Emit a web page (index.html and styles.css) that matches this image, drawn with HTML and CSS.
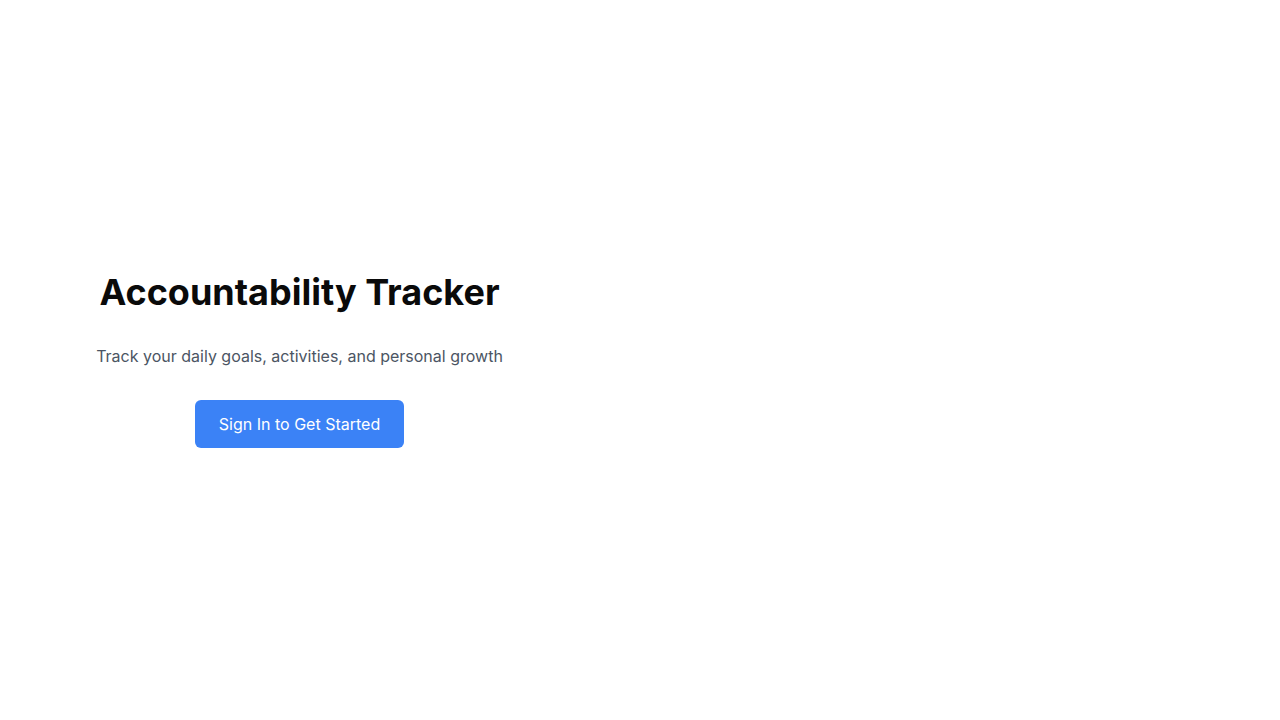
FILE: index.html
```html
<!DOCTYPE html>
<html lang="en">
<head>
<meta charset="utf-8">
<title>Accountability Tracker</title>
<link rel="stylesheet" href="styles.css">
</head>
<body>
<main class="page">
  <section class="hero">
    <h1 class="title">Accountability Tracker</h1>
    <p class="subtitle">Track your daily goals, activities, and personal growth</p>
    <button class="cta" type="button">Sign In to Get Started</button>
  </section>
</main>
</body>
</html>
```

FILE: styles.css
```css
* { box-sizing: border-box; }
html, body { margin: 0; padding: 0; background: #ffffff; }
body {
  font-family: Inter, "Noto Sans", "Liberation Sans", sans-serif;
  color: #0a0a0a;
}
.page {
  min-height: 720px;
  display: flex;
  align-items: center;
}
.hero {
  width: 599px;
  text-align: center;
}
.title {
  margin: 0 0 32px;
  font-size: 36px;
  line-height: 40px;
  font-weight: 700;
  color: #0a0a0a;
}
.subtitle {
  margin: 0 0 32px;
  font-size: 16px;
  line-height: 24px;
  color: #4b5563;
}
.cta {
  display: inline-block;
  height: 48px;
  padding: 12px 24px;
  border: 0;
  border-radius: 6px;
  background: #3b82f6;
  color: #ffffff;
  font-family: inherit;
  font-size: 16px;
  line-height: 24px;
  font-weight: 400;
  cursor: pointer;
}
```
